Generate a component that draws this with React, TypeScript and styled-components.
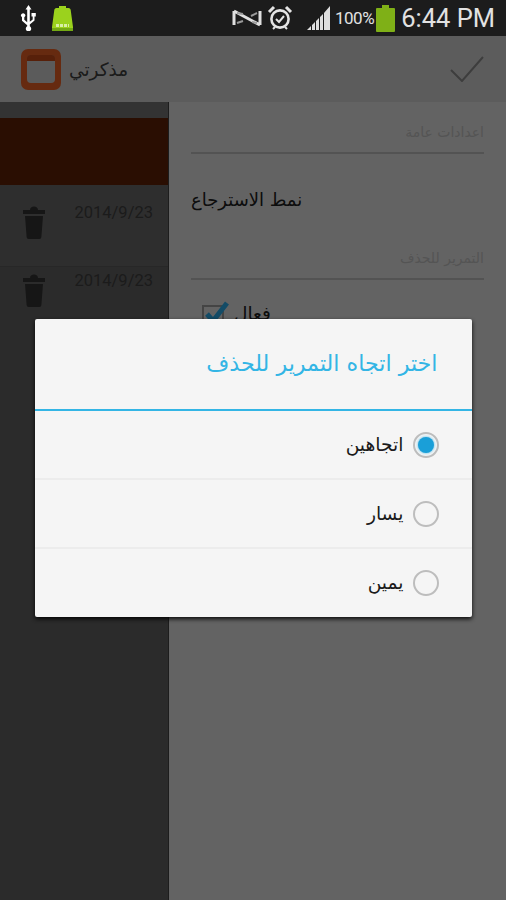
import React from "react";
import styled, { createGlobalStyle } from "styled-components";

const GlobalStyle = createGlobalStyle`
  html, body {
    margin: 0;
    padding: 0;
    background: #000;
  }
  * {
    box-sizing: border-box;
  }
`;

const ARABIC = `"DejaVu Sans", "Noto Sans", sans-serif`;

const UsbIcon = () => (
  <svg width="17" height="26" viewBox="0 0 17 26">
    <path d="M8.500 0l3 4.500H9.800v12.300l2.900-2.300v-3h-1.200V8h4.300v3.500h-1.300v4L9.800 19.600v1.700a2.700 2.700 0 1 1-2.600 0v-1.100L2 15.800v-3.600a2.100 2.100 0 1 1 2.300 0v2.600l2.900 2.400V4.500H5.500z" fill="#fff" />
  </svg>
);

const ChargeBattery = () => (
  <svg width="21" height="25" viewBox="0 0 21 25">
    <path d="M7 0h7v2h2.500c1.500 0 2 1 2.200 2L21 21v4H0v-4L2.300 4c.2-1 .7-2 2.200-2H7z" fill="#9bd21d" />
    <rect x="0" y="22" width="21" height="3" fill="#74a914" />
    <path d="M4 19.500h13" stroke="#d8efa6" strokeWidth="3" strokeDasharray="3 1" />
  </svg>
);

const MuteIcon = () => (
  <svg width="30" height="18" viewBox="0 0 30 18">
    <path d="M2 2v14M28 2v14M2 2l26 14" fill="none" stroke="#e0e0e0" strokeWidth="3" />
    <path d="M5 4l6 1M5 14l6-2M25 4l-6 3M25 14l-5-1" fill="none" stroke="#9a9a9a" strokeWidth="2" />
  </svg>
);

const AlarmIcon = () => (
  <svg width="26" height="26" viewBox="0 0 26 26">
    <circle cx="13" cy="14" r="8.600" fill="none" stroke="#e4e4e4" strokeWidth="2.600" />
    <path d="M9 14l3 3 5-6" fill="none" stroke="#e4e4e4" strokeWidth="2" />
    <path d="M2 7l5-5M24 7l-5-5" stroke="#e4e4e4" strokeWidth="3" />
    <path d="M6 24l2-2M20 24l-2-2" stroke="#e4e4e4" strokeWidth="2" />
  </svg>
);

const SignalIcon = () => (
  <svg width="23" height="24" viewBox="0 0 23 24">
    <path d="M0 24l4-4v4zM5 24v-5l3-3v8zM9 24V15l3-3v12zM13 24V11l3-3v16zM17 24V7l6-7v24z" fill="#dedede" />
  </svg>
);

const FullBattery = () => (
  <svg width="19" height="27" viewBox="0 0 19 27">
    <path d="M6 0h7v3h5a1 1 0 0 1 1 1v22a1 1 0 0 1-1 1H1a1 1 0 0 1-1-1V4a1 1 0 0 1 1-1h5z" fill="#7fb017" />
  </svg>
);

const TrashIcon = () => (
  <svg width="24" height="33" viewBox="0 0 24 33">
    <path d="M8 4c0-2 1.500-3.500 4-3.500S16 2 16 4h7v4H1V4zM3 10h18l-1.600 21a2 2 0 0 1-2 2H6.600a2 2 0 0 1-2-2z" fill="#383838" />
  </svg>
);

const AppLogo = () => (
  <svg width="40" height="41" viewBox="0 0 40 41">
    <rect width="40" height="41" rx="7" fill="#ff6a2a" />
    <rect x="6" y="6" width="28" height="28" rx="4" fill="#e4e4e4" />
    <path d="M6 12V9a3 3 0 0 1 3-3h22a3 3 0 0 1 3 3v3z" fill="#d9521a" />
  </svg>
);

const Screen = styled.div`
  position: relative;
  width: 506px;
  height: 900px;
  overflow: hidden;
  display: flex;
  flex-direction: column;
  font-family: ${ARABIC};
`;

const StatusBar = styled.div`
  height: 36px;
  flex: none;
  padding: 0 11px 0 20px;
  display: flex;
  align-items: center;
  background: #1c1c1c;
`;

const StatusSlot = styled.div<{ $left?: number; $auto?: boolean }>`
  display: flex;
  align-items: center;
  margin-left: ${({ $left, $auto }) => ($auto ? "auto" : `${$left ?? 0}px`)};
`;

const BatteryPercent = styled.span`
  margin-left: 5px;
  font: 17px "Roboto", "Liberation Sans", sans-serif;
  letter-spacing: -0.5px;
  color: #e2e2e2;
`;

const Clock = styled.span`
  margin-left: 6px;
  font: 25.5px "Roboto", "Liberation Sans", sans-serif;
  color: #e2e2e2;
`;

const AppBar = styled.div`
  height: 66px;
  flex: none;
  padding: 0 22px 0 21px;
  display: flex;
  align-items: center;
  background: #e6e6e6;
`;

const AppTitle = styled.span`
  margin-left: 8px;
  font-size: 18.5px;
  color: #444;
`;

const ConfirmIcon = styled.svg`
  margin-left: auto;
  color: #999;
`;

const Body = styled.div`
  flex: 1;
  display: flex;
`;

const NoteList = styled.div`
  width: 169px;
  flex: none;
  padding-top: 16px;
  background: linear-gradient(#808080 16px, #6c6c6c 16px);
  border-right: 1px solid #4a4a4a;
`;

const SelectedNote = styled.div`
  height: 67px;
  background: #692505;
`;

const NoteRow = styled.div<{ $top: number; $line?: boolean }>`
  height: ${({ $line }) => ($line ? 82 : 67)}px;
  padding: ${({ $top }) => $top}px 15px 0 22px;
  display: flex;
  justify-content: space-between;
  background: ${({ $line }) => ($line ? "#747474" : "transparent")};
  border-bottom: ${({ $line }) => ($line ? "1px solid #626262" : "none")};
`;

const NoteDate = styled.span`
  margin-top: -3px;
  font: 16.5px/20px "Roboto", "Liberation Sans", sans-serif;
  color: #454545;
`;

const Settings = styled.div`
  flex: 1;
  padding: 0 22px;
  background: #f8f8f8;
  direction: rtl;
`;

const SectionTitle = styled.div<{ $top: number }>`
  padding: ${({ $top }) => $top}px 0 12px;
  font-size: 14px;
  line-height: 16px;
  color: #d2d2d2;
  border-bottom: 2px solid #d0d0d0;
`;

const SettingRow = styled.div`
  height: 96px;
  padding-top: 35px;
  font-size: 18px;
  line-height: 22px;
  text-align: left;
  color: #222;
`;

const CheckRow = styled.div`
  margin-top: 21px;
  padding-left: 11px;
  display: flex;
  direction: ltr;
  align-items: center;
  gap: 4px;
  font-size: 18.5px;
  line-height: 24px;
  color: #222;
`;

const Overlay = styled.div`
  position: absolute;
  top: 36px;
  left: 0;
  right: 0;
  bottom: 0;
  display: flex;
  align-items: center;
  justify-content: center;
  background: rgba(0, 0, 0, 0.6);
`;

const Dialog = styled.div`
  width: 437px;
  height: 298px;
  background: #f5f5f5;
  border-radius: 2px;
  direction: rtl;
  box-shadow: 0 2px 4px rgba(0, 0, 0, 0.9);
`;

const DialogTitle = styled.div`
  height: 92px;
  padding: 31px 34px 0 0;
  font-size: 22.2px;
  line-height: 26px;
  color: #33b5e5;
  border-bottom: 2px solid #33b5e5;
`;

const Option = styled.div`
  height: 69px;
  padding-right: 33px;
  display: flex;
  align-items: center;
  gap: 9px;
  font-size: 18.7px;
  color: #1a1a1a;
  border-bottom: 2px solid #ececec;
  &:last-child {
    height: 67px;
    border-bottom: none;
  }
`;

const Radio = styled.span<{ $on?: boolean }>`
  width: 26px;
  height: 26px;
  flex: none;
  display: flex;
  align-items: center;
  justify-content: center;
  border-radius: 50%;
  border: 2px solid #bdbdbd;
  &::after {
    content: "";
    width: 16px;
    height: 16px;
    border-radius: 50%;
    background: ${({ $on }) => ($on ? "#1a9fd8" : "transparent")};
    box-shadow: ${({ $on }) => ($on ? "0 0 3px #4ab8e6" : "none")};
  }
`;

const notes = [
  { date: "2014/9/23", top: 21, line: true },
  { date: "2014/9/23", top: 7, line: false },
];
const options = [
  { label: "اتجاهين", on: true },
  { label: "يسار", on: false },
  { label: "يمين", on: false },
];

export default function App() {
  return (
    <Screen>
      <GlobalStyle />
      <StatusBar>
        <StatusSlot>
          <UsbIcon />
        </StatusSlot>
        <StatusSlot $left={15}>
          <ChargeBattery />
        </StatusSlot>
        <StatusSlot $auto>
          <MuteIcon />
        </StatusSlot>
        <StatusSlot $left={5}>
          <AlarmIcon />
        </StatusSlot>
        <StatusSlot $left={14}>
          <SignalIcon />
        </StatusSlot>
        <BatteryPercent>100%</BatteryPercent>
        <StatusSlot $left={2}>
          <FullBattery />
        </StatusSlot>
        <Clock>6:44 PM</Clock>
      </StatusBar>
      <AppBar>
        <AppLogo />
        <AppTitle>مذكرتي</AppTitle>
        <ConfirmIcon width="34" height="26" viewBox="0 0 34 26">
          <path d="M1 14l11 11L33 1" fill="none" stroke="currentColor" strokeWidth="2" />
        </ConfirmIcon>
      </AppBar>
      <Body>
        <NoteList>
          <SelectedNote />
          {notes.map((note, i) => (
            <NoteRow key={i} $top={note.top} $line={note.line}>
              <TrashIcon />
              <NoteDate>{note.date}</NoteDate>
            </NoteRow>
          ))}
        </NoteList>
        <Settings>
          <SectionTitle $top={22}>اعدادات عامة</SectionTitle>
          <SettingRow>نمط الاسترجاع</SettingRow>
          <SectionTitle $top={0}>التمرير للحذف</SectionTitle>
          <CheckRow>
            <svg width="28" height="26" viewBox="0 0 28 26">
              <rect x="1" y="5" width="20" height="20" fill="none" stroke="#aaa" strokeWidth="2" />
              <path d="M5 13l6 7L25 2" fill="none" stroke="#30bcff" strokeWidth="5" />
            </svg>
            <span>فعال</span>
          </CheckRow>
        </Settings>
      </Body>
      <Overlay>
        <Dialog>
          <DialogTitle>اختر اتجاه التمرير للحذف</DialogTitle>
          {options.map((opt) => (
            <Option key={opt.label}>
              <Radio $on={opt.on} />
              <span>{opt.label}</span>
            </Option>
          ))}
        </Dialog>
      </Overlay>
    </Screen>
  );
}
